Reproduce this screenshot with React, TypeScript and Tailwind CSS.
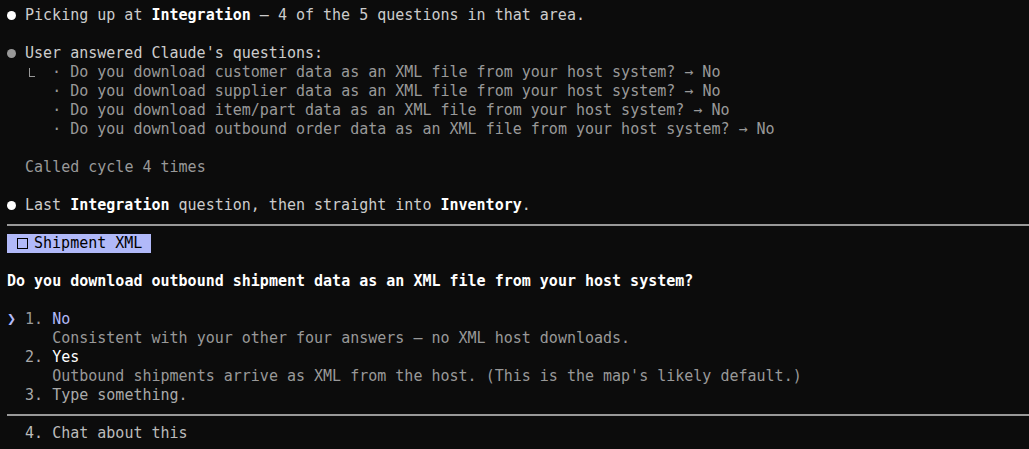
import React from 'react';

const answered = [
  'customer data',
  'supplier data',
  'item/part data',
  'outbound order data',
];

function Rule() {
  return (
    <div className="h-[19px] flex items-center">
      <div className="h-[2px] w-full bg-[#999999]" />
    </div>
  );
}

function Blank() {
  return <div className="h-[19px]" />;
}

function Dot({ color }: { color: string }) {
  return (
    <span className="inline-flex w-[9px] h-[19px] align-top items-center justify-center">
      <span className={`block w-[9px] h-[9px] rounded-full ${color}`} />
    </span>
  );
}

export default function App() {
  return (
    <div
      className="min-h-screen bg-[#0c0c0c] pt-[6px] pl-[7px] text-[15px] leading-[19px] whitespace-pre text-[#cccccc] overflow-hidden"
      style={{ fontFamily: '"DejaVu Sans Mono", "Liberation Mono", monospace' }}
    >
      <div>
        <Dot color="bg-white" /> Picking up at <b className="text-white">Integration</b> — 4 of the 5 questions in that area.
      </div>
      <Blank />
      <div>
        <Dot color="bg-[#999999]" /> User answered Claude's questions:
      </div>
      {answered.map((item, i) => (
        <div key={item} className="text-[#999999]">
          {i === 0 ? (
            <>
              {'  '}
              <span className="inline-block w-[9px] h-[19px] align-top relative">
                <span className="absolute left-[4px] top-[5px] w-[6px] h-[9px] border-l border-b border-[#999999]" />
              </span>
              {'  · '}
            </>
          ) : (
            '     · '
          )}
          Do you download {item} as an XML file from your host system? → No
        </div>
      ))}
      <Blank />
      <div className="text-[#999999]">  Called cycle 4 times</div>
      <Blank />
      <div>
        <Dot color="bg-white" /> Last <b className="text-white">Integration</b> question, then straight into <b className="text-white">Inventory</b>.
      </div>
      <Rule />
      <div>
        <span className="inline-flex h-[19px] w-[144px] align-top items-center pl-[9px] bg-[#b1b9f9] text-black">
          <span className="inline-flex w-[9px] shrink-0">
            <span className="block shrink-0 ml-[1px] w-[11px] h-[11px] border border-black" />
          </span>
          {' Shipment XML'}
        </span>
      </div>
      <Blank />
      <div className="font-bold text-white">Do you download outbound shipment data as an XML file from your host system?</div>
      <Blank />
      <div>
        <span className="text-[#b1b9f9] font-bold">❯</span> <span className="text-[#999999]">1.</span> <span className="text-[#b1b9f9]">No</span>
      </div>
      <div className="text-[#999999]">     Consistent with your other four answers — no XML host downloads.</div>
      <div>
        <span className="text-[#aaaaaa]">  2.</span> <span className="text-white">Yes</span>
      </div>
      <div className="text-[#999999]">     Outbound shipments arrive as XML from the host. (This is the map's likely default.)</div>
      <div className="text-[#aaaaaa]">  3. Type something.</div>
      <Rule />
      <div className="text-[#bbbbbb]">  4. Chat about this</div>
    </div>
  );
}
